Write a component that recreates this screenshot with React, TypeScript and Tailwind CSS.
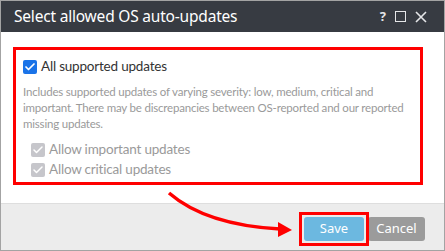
import { Check } from 'lucide-react';

// Dialog: pick OS auto-update categories
export default function App() {
  const subOptions = ['Allow important updates', 'Allow critical updates'];

  return (
    <div
      className="relative w-[445px] h-[251px] flex flex-col bg-white border border-[#a3a3a3] overflow-hidden"
      style={{ fontFamily: '"Noto Sans", "Open Sans", sans-serif' }}
    >
      {/* Title bar */}
      <div className="h-[31px] shrink-0 bg-[#373b42] flex items-center justify-between pl-[13px] pr-[17px]">
        <span className="text-white text-[15.5px] tracking-[-0.2px]">Select allowed OS auto-updates</span>
        <div className="flex items-center gap-[9px] text-[#e5e6e8]">
          <span className="font-bold text-[13px] leading-none">?</span>
          <span className="w-[11px] h-[11px] border-[1.5px] border-[#e5e6e8]"></span>
          <svg width="12" height="12" viewBox="0 0 12 12">
            <path d="M1 1 L11 11 M11 1 L1 11" stroke="#e5e6e8" strokeWidth="1.6" />
          </svg>
        </div>
      </div>

      {/* Body */}
      <div className="flex-1 px-[12px] pt-[15px]" style={{ fontFamily: 'Lato, "Noto Sans", sans-serif' }}>
        <div className="w-[410px] h-[138px] border-[3px] border-[#ff0000] pl-[7px] pr-[6px] pt-[9px]">
          <label className="flex items-center gap-[4px]">
            <span className="w-[14px] h-[14px] rounded-[2px] bg-[#1a73e8] flex items-center justify-center">
              <Check size={12} strokeWidth={3.5} className="text-white" />
            </span>
            <span className="text-[13.5px] tracking-[-0.2px] leading-[15px] text-[#333333]">All supported updates</span>
          </label>

          <p className="mt-[10px] text-[11.5px] tracking-[-0.2px] leading-[16px] text-[#9a9a9a]">
            Includes supported updates of varying severity: low, medium, critical and important. There may be discrepancies between OS-reported and our reported missing updates.
          </p>

          <div className="mt-[10px] pl-[8px] flex flex-col gap-[5px]">
            {subOptions.map((opt) => (
              <label key={opt} className="flex items-center gap-[4px]">
                <span className="w-[14px] h-[14px] rounded-[2px] bg-[#c6c6cb] flex items-center justify-center">
                  <Check size={12} strokeWidth={3} className="text-white" />
                </span>
                <span className="text-[13.5px] tracking-[-0.2px] text-[#9a9a9a] leading-[15px]">{opt}</span>
              </label>
            ))}
          </div>
        </div>
      </div>

      {/* Footer */}
      <div className="h-[47px] shrink-0 bg-[#ececec] border-t border-[#dedede] flex items-center justify-end pr-[19px]">
        <div className="relative z-10 p-[2px] border-[3px] border-[#ff0000] -mr-[1px] mt-[3px]">
          <button className="block w-[60px] h-[24px] rounded-[3px] bg-[#6cb8e0] text-white text-[13px]">Save</button>
        </div>
        <button className="w-[57px] h-[24px] mt-[3px] rounded-[3px] bg-[#9b9b9b] text-white text-[13px]">Cancel</button>
      </div>

      {/* Annotation arrow */}
      <svg className="absolute left-0 top-0 pointer-events-none" width="445" height="251">
        <path d="M168 192 Q 205 224 279 228" fill="none" stroke="#ff0000" strokeWidth="3.5" />
        <polygon points="277,221 291,229 277,236" fill="#ff0000" />
      </svg>
    </div>
  );
}
